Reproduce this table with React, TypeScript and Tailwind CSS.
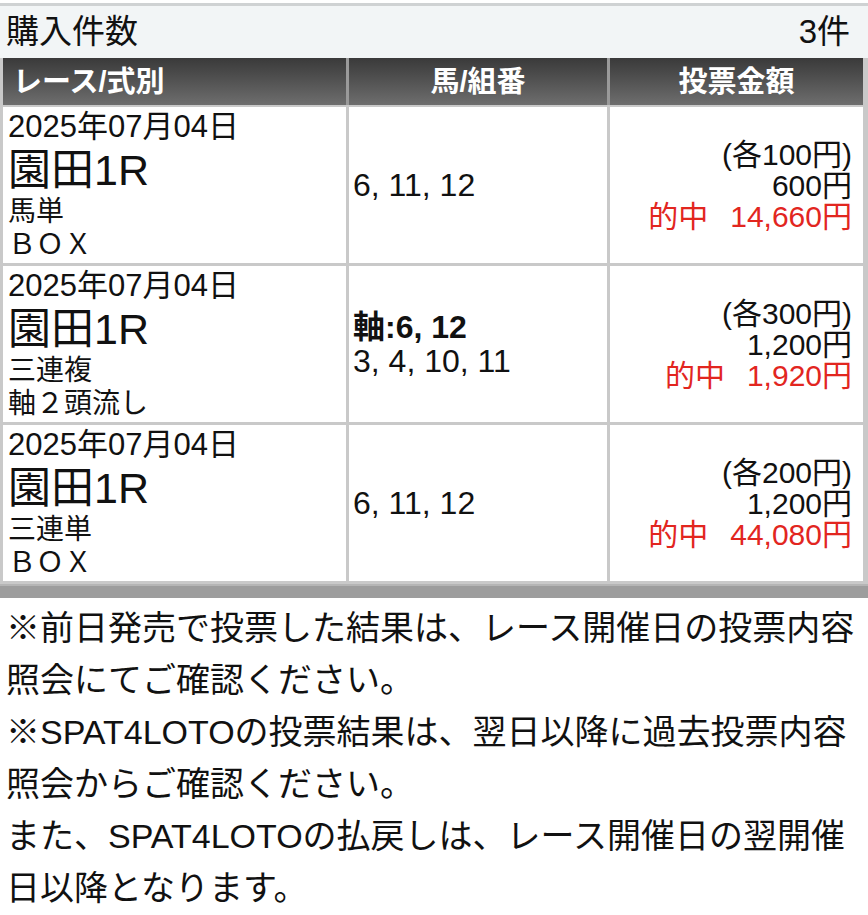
const font = { fontFamily: '"Liberation Sans", "Noto Sans CJK JP", sans-serif' }

type Bet = {
  date: string
  race: string
  kind: string
  method: string
  axis?: string
  numbers: string
  unit: string
  total: string
  hit: string
}

const bets: Bet[] = [
  { date: '2025年07月04日', race: '園田1R', kind: '馬単', method: 'ＢＯＸ', numbers: '6, 11, 12', unit: '(各100円)', total: '600円', hit: '14,660円' },
  { date: '2025年07月04日', race: '園田1R', kind: '三連複', method: '軸２頭流し', axis: '軸:6, 12', numbers: '3, 4, 10, 11', unit: '(各300円)', total: '1,200円', hit: '1,920円' },
  { date: '2025年07月04日', race: '園田1R', kind: '三連単', method: 'ＢＯＸ', numbers: '6, 11, 12', unit: '(各200円)', total: '1,200円', hit: '44,080円' },
]

export default function App() {
  return (
    <div className="w-[868px] h-[915px] overflow-hidden bg-white text-[#111]" style={font}>
      {/* 購入件数 */}
      <div className="mt-[3px] border-t-[3px] border-[#cfd2d3] bg-[#f2f5f6] h-[55px] flex items-center justify-between pl-[6px] pr-[18px] text-[33px] leading-[40px]">
        <span>購入件数</span>
        <span>3件</span>
      </div>

      {/* table */}
      <div className="bg-[#c9c9c9] pl-[3px] pr-[5px] pb-[3px]">
        <div className="grid grid-cols-[343px_258px_1fr] gap-x-[3px] h-[47px] bg-gradient-to-b from-[#3a3a3a] to-[#6e6e6e] text-white font-bold text-[29px] leading-[36px]">
          <div className="flex items-center pl-[10px] border-r-[3px] border-[#9a9a9a] -mr-[3px]">レース/式別</div>
          <div className="flex items-center justify-center border-r-[3px] border-[#9a9a9a] -mr-[3px]">馬/組番</div>
          <div className="flex items-center justify-center">投票金額</div>
        </div>
        <div className="flex flex-col gap-y-[3px] pt-[2px]">
          {bets.map((b, i) => (
            <div key={i} className="grid grid-cols-[343px_258px_1fr] gap-x-[3px] h-[156px]">
              <div className="bg-white pl-[5px] pt-[2px] flex flex-col">
                <span className="text-[31px] leading-[36px]">{b.date}</span>
                <span className="text-[43px] leading-[50px]">{b.race}</span>
                <span className="text-[28px] leading-[33px]">{b.kind}</span>
                <span className="text-[28px] leading-[33px]">{b.method}</span>
              </div>
              <div className="bg-white pl-[4px] flex flex-col justify-center text-[32px] leading-[34px]">
                {b.axis && <span className="font-bold">{b.axis}</span>}
                <span>{b.numbers}</span>
              </div>
              <div className="bg-white pr-[11px] flex flex-col justify-center items-end text-[30px] leading-[31px]">
                <span>{b.unit}</span>
                <span>{b.total}</span>
                <span className="text-[#e2261f]">
                  的中<span className="ml-[22px]">{b.hit}</span>
                </span>
              </div>
            </div>
          ))}
        </div>
      </div>
      <div className="h-[14px] bg-[#9d9d9d] border-t-[2px] border-[#b5b5b5]" />

      {/* notes */}
      <div className="px-[6px] pt-[4px] text-[34px] leading-[52px] text-[#111]">
        ※前日発売で投票した結果は、レース開催日の投票内容<br />
        照会にてご確認ください。<br />
        ※SPAT4LOTOの投票結果は、翌日以降に過去投票内容<br />
        照会からご確認ください。<br />
        また、SPAT4LOTOの払戻しは、レース開催日の翌開催<br />
        日以降となります。
      </div>
      <div className="mt-[2px] h-[12px] bg-[#9d9d9d] border-t-[2px] border-[#c4c4c4]" />
    </div>
  )
}
